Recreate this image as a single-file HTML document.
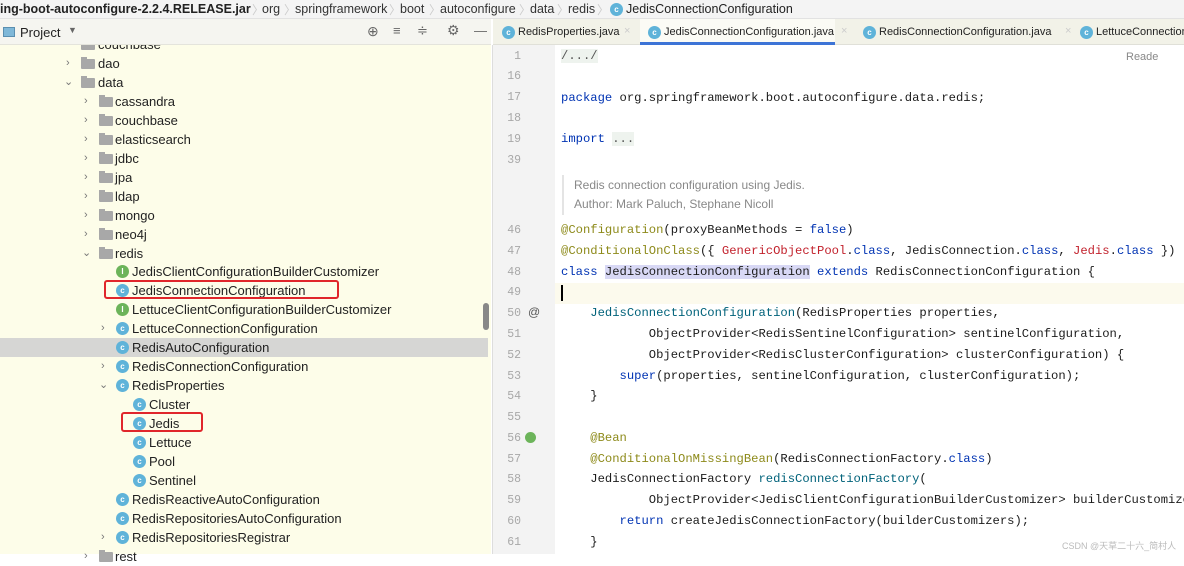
<!DOCTYPE html>
<html><head><meta charset="utf-8"><style>
*{margin:0;padding:0;box-sizing:border-box}
body{width:1184px;height:554px;overflow:hidden;position:relative;background:#fff;font-family:"Liberation Sans",sans-serif;color:#222}
.a{position:absolute;white-space:pre}
#bc{left:0;top:0;width:1184px;height:19px;background:#f4f4f4;border-bottom:1px solid #e2e2e2;font-size:12.5px}
#bc .s{position:absolute;top:2px;color:#333}
#bc .sep{position:absolute;top:1px;color:#ccc;font-size:12px}
#left{left:0;top:19px;width:491px;height:535px;background:#fdfde9;overflow:hidden}
#ptb{left:0;top:19px;width:491px;height:26px;background:#f5f5f0;border-bottom:1px solid #e4e4dc;z-index:3}
.row{position:absolute;left:0;width:485px;height:19px;font-size:13px;line-height:19px}
.ar{position:absolute;font-size:11px;color:#777;top:0}
.fd{position:absolute;top:5px;width:14px;height:10px;background:#a8a8a8;border-radius:1px}
.fd:before{content:"";position:absolute;left:0;top:-2px;width:6px;height:3px;background:#a8a8a8}
.ic{position:absolute;top:3px;width:13px;height:13px;border-radius:50%;background:#5fb3d9;color:#fff;font-size:8px;line-height:13px;text-align:center;font-weight:bold}
.ic.i{background:#6cb45a}
.tx{position:absolute;top:0}
#tabs{left:493px;top:19px;width:691px;height:26px;background:#f2f2e8;border-bottom:1px solid #e0e0d8;font-size:11px}
#gut{left:492px;top:45px;width:63px;height:509px;background:#f3f3f3;border-left:1px solid #ddd}
.ln{position:absolute;left:497px;width:24px;text-align:right;font-family:"Liberation Mono",monospace;font-size:11.5px;color:#a8a8a8}
.cd{position:absolute;left:561px;font-family:"Liberation Mono",monospace;font-size:12.2px;color:#1b1b1b;white-space:pre}
.k{color:#1f3d9e}.an{color:#8d8a1a}.r{color:#c2212c}.f{color:#00627a}.kw{color:#0033b3}
</style></head><body>
<div class="a" id="bc"><span class="a" style="left:0;top:2px;font-weight:bold">ing-boot-autoconfigure-2.2.4.RELEASE.jar</span>
<span class="sep" style="left:252px">〉</span><span class="s" style="left:262px">org</span>
<span class="sep" style="left:284px">〉</span><span class="s" style="left:295px">springframework</span>
<span class="sep" style="left:389px">〉</span><span class="s" style="left:400px">boot</span>
<span class="sep" style="left:429px">〉</span><span class="s" style="left:440px">autoconfigure</span>
<span class="sep" style="left:519px">〉</span><span class="s" style="left:530px">data</span>
<span class="sep" style="left:557px">〉</span><span class="s" style="left:568px">redis</span>
<span class="sep" style="left:597px">〉</span>
<span class="ic" style="position:absolute;left:610px;top:3px">c</span><span class="a" style="left:626px;top:2px">JedisConnectionConfiguration</span></div>
<div class="a" id="left"></div>
<div class="a" id="ptb"><div class="a" style="left:3px;top:8px;width:12px;height:10px;background:#7fb8d8;border:1px solid #5a8fb0"></div><span class="a" style="left:20px;top:6px;font-size:13px">Project</span><span class="a" style="left:68px;top:6px;font-size:9px;color:#666">▼</span><span class="a" style="left:367px;top:4px;font-size:14px;color:#666">⊕</span><span class="a" style="left:393px;top:4px;font-size:13px;color:#666">≡</span><span class="a" style="left:417px;top:4px;font-size:13px;color:#666">≑</span><span class="a" style="left:447px;top:3px;font-size:14px;color:#666">⚙</span><span class="a" style="left:474px;top:4px;font-size:13px;color:#666">—</span></div>
<div class="a" style="left:483px;top:303px;width:6px;height:27px;background:#888;border-radius:3px"></div>
<div class="a" style="left:0;top:338px;width:488px;height:19px;background:#d6d6d4"></div>

<div class="row" style="top:35px"><span class="fd" style="left:81px"></span><span class="tx" style="left:98px">couchbase</span></div>
<div class="row" style="top:54px"><span class="ar" style="left:66px">›</span><span class="fd" style="left:81px"></span><span class="tx" style="left:98px">dao</span></div>
<div class="row" style="top:73px"><span class="ar" style="left:64px">⌄</span><span class="fd" style="left:81px"></span><span class="tx" style="left:98px">data</span></div>
<div class="row" style="top:92px"><span class="ar" style="left:84px">›</span><span class="fd" style="left:99px"></span><span class="tx" style="left:115px">cassandra</span></div>
<div class="row" style="top:111px"><span class="ar" style="left:84px">›</span><span class="fd" style="left:99px"></span><span class="tx" style="left:115px">couchbase</span></div>
<div class="row" style="top:130px"><span class="ar" style="left:84px">›</span><span class="fd" style="left:99px"></span><span class="tx" style="left:115px">elasticsearch</span></div>
<div class="row" style="top:149px"><span class="ar" style="left:84px">›</span><span class="fd" style="left:99px"></span><span class="tx" style="left:115px">jdbc</span></div>
<div class="row" style="top:168px"><span class="ar" style="left:84px">›</span><span class="fd" style="left:99px"></span><span class="tx" style="left:115px">jpa</span></div>
<div class="row" style="top:187px"><span class="ar" style="left:84px">›</span><span class="fd" style="left:99px"></span><span class="tx" style="left:115px">ldap</span></div>
<div class="row" style="top:206px"><span class="ar" style="left:84px">›</span><span class="fd" style="left:99px"></span><span class="tx" style="left:115px">mongo</span></div>
<div class="row" style="top:225px"><span class="ar" style="left:84px">›</span><span class="fd" style="left:99px"></span><span class="tx" style="left:115px">neo4j</span></div>
<div class="row" style="top:244px"><span class="ar" style="left:82px">⌄</span><span class="fd" style="left:99px"></span><span class="tx" style="left:115px">redis</span></div>
<div class="row" style="top:262px"><span class="ic i" style="left:116px">I</span><span class="tx" style="left:132px">JedisClientConfigurationBuilderCustomizer</span></div>
<div class="row" style="top:281px"><span class="ic" style="left:116px">c</span><span class="tx" style="left:132px">JedisConnectionConfiguration</span></div>
<div class="a" style="left:104px;top:280px;width:235px;height:19px;border:2px solid #e0262b;border-radius:3px"></div>
<div class="row" style="top:300px"><span class="ic i" style="left:116px">I</span><span class="tx" style="left:132px">LettuceClientConfigurationBuilderCustomizer</span></div>
<div class="row" style="top:319px"><span class="ar" style="left:101px">›</span><span class="ic" style="left:116px">c</span><span class="tx" style="left:132px">LettuceConnectionConfiguration</span></div>
<div class="row" style="top:338px"><span class="ic" style="left:116px">c</span><span class="tx" style="left:132px">RedisAutoConfiguration</span></div>
<div class="row" style="top:357px"><span class="ar" style="left:101px">›</span><span class="ic" style="left:116px">c</span><span class="tx" style="left:132px">RedisConnectionConfiguration</span></div>
<div class="row" style="top:376px"><span class="ar" style="left:99px">⌄</span><span class="ic" style="left:116px">c</span><span class="tx" style="left:132px">RedisProperties</span></div>
<div class="row" style="top:395px"><span class="ic" style="left:133px">c</span><span class="tx" style="left:149px">Cluster</span></div>
<div class="row" style="top:414px"><span class="ic" style="left:133px">c</span><span class="tx" style="left:149px">Jedis</span></div>
<div class="a" style="left:121px;top:412px;width:82px;height:20px;border:2px solid #e0262b;border-radius:3px"></div>
<div class="row" style="top:433px"><span class="ic" style="left:133px">c</span><span class="tx" style="left:149px">Lettuce</span></div>
<div class="row" style="top:452px"><span class="ic" style="left:133px">c</span><span class="tx" style="left:149px">Pool</span></div>
<div class="row" style="top:471px"><span class="ic" style="left:133px">c</span><span class="tx" style="left:149px">Sentinel</span></div>
<div class="row" style="top:490px"><span class="ic" style="left:116px">c</span><span class="tx" style="left:132px">RedisReactiveAutoConfiguration</span></div>
<div class="row" style="top:509px"><span class="ic" style="left:116px">c</span><span class="tx" style="left:132px">RedisRepositoriesAutoConfiguration</span></div>
<div class="row" style="top:528px"><span class="ar" style="left:101px">›</span><span class="ic" style="left:116px">c</span><span class="tx" style="left:132px">RedisRepositoriesRegistrar</span></div>
<div class="row" style="top:547px"><span class="ar" style="left:84px">›</span><span class="fd" style="left:99px"></span><span class="tx" style="left:115px">rest</span></div>

<div class="a" id="tabs">
<span class="ic" style="position:absolute;left:9px;top:7px">c</span><span class="a" style="left:25px;top:7px">RedisProperties.java</span><span class="a" style="left:131px;top:6px;color:#ccc">×</span>
<div class="a" style="left:147px;top:0;width:195px;height:26px;background:#fbfbf5;border-bottom:3px solid #3d74d6"></div>
<span class="ic" style="position:absolute;left:155px;top:7px">c</span><span class="a" style="left:171px;top:7px">JedisConnectionConfiguration.java</span><span class="a" style="left:348px;top:6px;color:#ccc">×</span>
<span class="ic" style="position:absolute;left:370px;top:7px">c</span><span class="a" style="left:386px;top:7px">RedisConnectionConfiguration.java</span><span class="a" style="left:572px;top:6px;color:#ccc">×</span>
<span class="ic" style="position:absolute;left:587px;top:7px">c</span><span class="a" style="left:603px;top:7px">LettuceConnection</span>
</div>
<div class="a" id="gut"></div>
<div class="a" style="left:555px;top:283px;width:629px;height:21px;background:#fcfaed"></div>
<div class="a" style="left:1126px;top:51px;font-size:11px;color:#888">Reade</div>

<div class="ln" style="top:70px">16</div><div class="ln" style="top:50px">1</div>
<div class="ln" style="top:91px">17</div><div class="ln" style="top:112px">18</div>
<div class="ln" style="top:133px">19</div><div class="ln" style="top:154px">39</div>
<div class="ln" style="top:224px">46</div><div class="ln" style="top:245px">47</div>
<div class="ln" style="top:266px">48</div><div class="ln" style="top:286px">49</div>
<div class="ln" style="top:307px">50</div><div class="ln" style="top:328px">51</div>
<div class="ln" style="top:349px">52</div><div class="ln" style="top:370px">53</div>
<div class="ln" style="top:390px">54</div><div class="ln" style="top:411px">55</div>
<div class="ln" style="top:432px">56</div><div class="ln" style="top:453px">57</div>
<div class="ln" style="top:473px">58</div><div class="ln" style="top:494px">59</div>
<div class="ln" style="top:515px">60</div><div class="ln" style="top:536px">61</div>
<div class="a" style="left:528px;top:305px;font-size:12px;color:#555">@</div>
<div class="a" style="left:525px;top:432px;width:11px;height:11px;border-radius:50%;background:#6cb45a"></div>

<div class="a" style="left:562px;top:175px;width:2px;height:40px;background:#e4e4e4"></div>
<div class="a" style="left:574px;top:178px;font-size:12px;color:#888">Redis connection configuration using Jedis.</div>
<div class="a" style="left:574px;top:197px;font-size:12px;color:#888">Author: Mark Paluch, Stephane Nicoll</div>

<div class="cd" style="top:49px;color:#555;background:#eef3ee">/.../</div>
<div class="cd" style="top:91px"><span class="kw">package</span> org.springframework.boot.autoconfigure.data.redis;</div>
<div class="cd" style="top:132px"><span class="kw">import</span> <span style="background:#eef3ee;color:#555">...</span></div>
<div class="cd" style="top:223px"><span class="an">@Configuration</span>(proxyBeanMethods = <span class="kw">false</span>)</div>
<div class="cd" style="top:244px"><span class="an">@ConditionalOnClass</span>({ <span class="r">GenericObjectPool</span>.<span class="kw">class</span>, JedisConnection.<span class="kw">class</span>, <span class="r">Jedis</span>.<span class="kw">class</span> })</div>
<div class="cd" style="top:265px"><span class="kw">class</span> <span style="background:#d8d8f5">JedisConnectionConfiguration</span> <span class="kw">extends</span> RedisConnectionConfiguration {</div>
<div class="a" style="left:561px;top:285px;width:2px;height:16px;background:#000"></div>
<div class="cd" style="top:306px">    <span class="f">JedisConnectionConfiguration</span>(RedisProperties properties,</div>
<div class="cd" style="top:327px">            ObjectProvider&lt;RedisSentinelConfiguration&gt; sentinelConfiguration,</div>
<div class="cd" style="top:348px">            ObjectProvider&lt;RedisClusterConfiguration&gt; clusterConfiguration) {</div>
<div class="cd" style="top:369px">        <span class="kw">super</span>(properties, sentinelConfiguration, clusterConfiguration);</div>
<div class="cd" style="top:389px">    }</div>
<div class="cd" style="top:431px">    <span class="an">@Bean</span></div>
<div class="cd" style="top:452px">    <span class="an">@ConditionalOnMissingBean</span>(RedisConnectionFactory.<span class="kw">class</span>)</div>
<div class="cd" style="top:472px">    JedisConnectionFactory <span class="f">redisConnectionFactory</span>(</div>
<div class="cd" style="top:493px">            ObjectProvider&lt;JedisClientConfigurationBuilderCustomizer&gt; builderCustomizers) {</div>
<div class="cd" style="top:514px">        <span class="kw">return</span> createJedisConnectionFactory(builderCustomizers);</div>
<div class="cd" style="top:535px">    }</div>
<div class="a" style="left:1062px;top:539px;font-size:9px;color:#bbb;font-family:'Liberation Sans','Noto Sans CJK SC',sans-serif">CSDN @天草二十六_简村人</div>
</body></html>
